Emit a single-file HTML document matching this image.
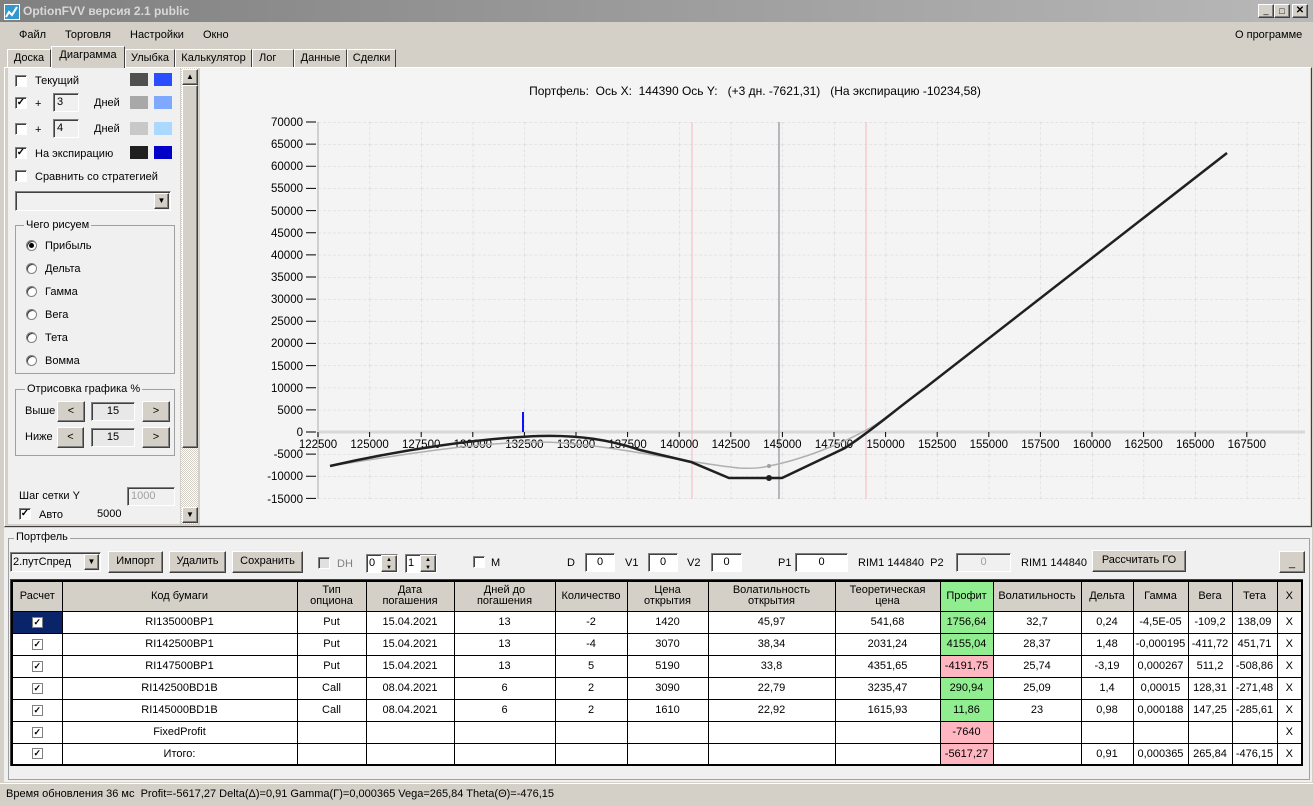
<!DOCTYPE html>
<html><head><meta charset="utf-8">
<style>
*{margin:0;padding:0;box-sizing:border-box}
body{width:1313px;height:806px;overflow:hidden;background:#d4d0c8;font-family:"Liberation Sans",sans-serif;font-size:11px;color:#000;position:relative}
.a{position:absolute}
.cb{position:absolute;width:12px;height:12px;background:#fff;border:1px solid #808080;border-right-color:#fff;border-bottom-color:#fff;box-shadow:inset 1px 1px 0 #404040;font-size:10px;line-height:10px;text-align:center;font-weight:bold}
.rb{position:absolute;width:11px;height:11px;border-radius:50%;background:#fff;border:1px solid #808080;box-shadow:inset 1px 1px 0 #404040}
.btn{position:absolute;background:#d4d0c8;border:1px solid;border-color:#fff #404040 #404040 #fff;box-shadow:inset -1px -1px 0 #808080;text-align:center;font-size:11px}
.ed{position:absolute;background:#fff;border:1px solid;border-color:#808080 #fff #fff #808080;box-shadow:inset 1px 1px 0 #404040;text-align:center;font-size:11px}
.tab{position:absolute;top:49px;height:18px;border:1px solid;border-color:#fff #404040 transparent #fff;border-bottom:none;text-align:center;line-height:17px;font-size:11px;background:#d4d0c8}
table{border-collapse:collapse;font-family:"Liberation Sans Narrow","Liberation Sans",sans-serif;font-size:11px}
td{border:1px solid #000;text-align:center;height:22px;padding:0;background:#fff;white-space:nowrap;overflow:hidden}
tr.h td{background:#d4d0c8;height:30px;line-height:11px}
.g{background:#90ee90!important}.p{background:#ffb6c1!important}
.k{display:inline-block;width:11px;height:11px;border:1px solid #808080;background:#fff;font-size:9px;line-height:9px;font-weight:bold;vertical-align:middle}
</style></head><body>
<div class="a" style="left:0;top:0;width:1313px;height:22px;background:linear-gradient(90deg,#808080,#b8b8b8);"></div>
<div class="a" style="left:4px;top:4px;width:16px;height:16px;background:#3399cc;border:1px solid #fff"></div>
<svg class="a" style="left:4px;top:4px" width="16" height="16"><path d="M2 13 L5 8 L8 11 L13 3" stroke="#fff" stroke-width="2" fill="none"/></svg>
<div class="a" style="left:23px;top:4px;color:#d8d8d8;font-weight:bold;font-size:12px">OptionFVV версия 2.1 public</div>
<div class="btn" style="left:1258px;top:4px;width:16px;height:14px;font-size:9px;line-height:10px">_</div>
<div class="btn" style="left:1274px;top:4px;width:16px;height:14px;font-size:9px;line-height:12px">□</div>
<div class="btn" style="left:1292px;top:4px;width:16px;height:14px;font-size:10px;line-height:12px;font-weight:bold">✕</div>
<div class="a" style="left:19px;top:29px">Файл</div>
<div class="a" style="left:65px;top:29px">Торговля</div>
<div class="a" style="left:130px;top:29px">Настройки</div>
<div class="a" style="left:203px;top:29px">Окно</div>
<div class="a" style="left:1235px;top:29px">О программе</div>
<div class="tab" style="left:7px;width:44px">Доска</div>
<div class="tab" style="left:51px;top:46px;height:22px;width:74px;z-index:2">Диаграмма</div>
<div class="tab" style="left:125px;width:50px">Улыбка</div>
<div class="tab" style="left:175px;width:77px">Калькулятор</div>
<div class="tab" style="left:252px;width:42px;text-align:left;padding-left:6px">Лог</div>
<div class="tab" style="left:294px;width:53px">Данные</div>
<div class="tab" style="left:347px;width:49px">Сделки</div>
<div class="a" style="left:4px;top:67px;width:1308px;height:460px;border:1px solid;border-color:#fff #404040 #404040 #fff;background:#d4d0c8"></div>
<div class="a" style="left:8px;top:68px;width:172px;height:456px;background:#f0f0f0"></div>
<div class="cb" style="left:15px;top:75px"></div><div class="a" style="left:35px;top:75px">Текущий</div>
<div class="a" style="left:130px;top:73px;width:18px;height:13px;background:#505050"></div><div class="a" style="left:154px;top:73px;width:18px;height:13px;background:#2a4dff"></div>
<div class="cb" style="left:15px;top:97px">✓</div><div class="a" style="left:35px;top:98px">+</div>
<div class="ed" style="left:53px;top:93px;width:26px;height:19px;text-align:left;padding-left:3px;line-height:16px;background:#f0f0f0">3</div>
<div class="a" style="left:94px;top:97px">Дней</div>
<div class="a" style="left:130px;top:96px;width:18px;height:13px;background:#a8a8a8"></div><div class="a" style="left:154px;top:96px;width:18px;height:13px;background:#7fa8ff"></div>
<div class="cb" style="left:15px;top:123px"></div><div class="a" style="left:35px;top:124px">+</div>
<div class="ed" style="left:53px;top:119px;width:26px;height:19px;text-align:left;padding-left:3px;line-height:16px;background:#f0f0f0">4</div>
<div class="a" style="left:94px;top:123px">Дней</div>
<div class="a" style="left:130px;top:122px;width:18px;height:13px;background:#c8c8c8"></div><div class="a" style="left:154px;top:122px;width:18px;height:13px;background:#aad8ff"></div>
<div class="cb" style="left:15px;top:147px">✓</div><div class="a" style="left:35px;top:148px">На экспирацию</div>
<div class="a" style="left:130px;top:146px;width:18px;height:13px;background:#202020"></div><div class="a" style="left:154px;top:146px;width:18px;height:13px;background:#0000c8"></div>
<div class="cb" style="left:15px;top:170px"></div><div class="a" style="left:35px;top:171px">Сравнить со стратегией</div>
<div class="ed" style="left:15px;top:191px;width:156px;height:20px;background:#f0f0f0"></div>
<div class="btn" style="left:154px;top:193px;width:15px;height:16px;font-size:8px;line-height:14px">▼</div>
<div class="a" style="left:15px;top:225px;width:160px;height:149px;border:1px solid #a0a0a0"></div>
<div class="a" style="left:24px;top:219px;background:#f0f0f0;padding:0 2px">Чего рисуем</div>
<div class="rb" style="left:26px;top:240px"></div><div class="a" style="left:29px;top:243px;width:5px;height:5px;border-radius:50%;background:#000"></div><div class="a" style="left:45px;top:240px">Прибыль</div>
<div class="rb" style="left:26px;top:263px"></div><div class="a" style="left:45px;top:263px">Дельта</div>
<div class="rb" style="left:26px;top:286px"></div><div class="a" style="left:45px;top:286px">Гамма</div>
<div class="rb" style="left:26px;top:309px"></div><div class="a" style="left:45px;top:309px">Вега</div>
<div class="rb" style="left:26px;top:332px"></div><div class="a" style="left:45px;top:332px">Тета</div>
<div class="rb" style="left:26px;top:355px"></div><div class="a" style="left:45px;top:355px">Вомма</div>
<div class="a" style="left:15px;top:389px;width:160px;height:67px;border:1px solid #a0a0a0"></div>
<div class="a" style="left:25px;top:383px;background:#f0f0f0;padding:0 2px">Отрисовка графика %</div>
<div class="a" style="left:25px;top:405px">Выше</div>
<div class="btn" style="left:57px;top:401px;width:28px;height:21px;line-height:19px">&lt;</div>
<div class="ed" style="left:91px;top:402px;width:44px;height:19px;line-height:17px;background:#e8e8e8">15</div>
<div class="btn" style="left:142px;top:401px;width:28px;height:21px;line-height:19px">&gt;</div>
<div class="a" style="left:25px;top:431px">Ниже</div>
<div class="btn" style="left:57px;top:427px;width:27px;height:21px;line-height:19px">&lt;</div>
<div class="ed" style="left:91px;top:428px;width:44px;height:19px;line-height:17px;background:#e8e8e8">15</div>
<div class="btn" style="left:142px;top:427px;width:28px;height:21px;line-height:19px">&gt;</div>
<div class="a" style="left:19px;top:490px">Шаг сетки Y</div>
<div class="ed" style="left:127px;top:487px;width:48px;height:19px;text-align:left;padding-left:3px;line-height:17px;color:#a0a0a0;background:#f0f0f0">1000</div>
<div class="cb" style="left:19px;top:508px">✓</div><div class="a" style="left:39px;top:509px">Авто</div><div class="a" style="left:97px;top:508px">5000</div>
<div class="a" style="left:181px;top:68px;width:17px;height:456px;background:repeating-conic-gradient(#d4d0c8 0 25%,#fff 0 50%) 0 0/2px 2px"></div>
<div class="btn" style="left:182px;top:69px;width:16px;height:16px;font-size:8px;line-height:13px">▲</div>
<div class="btn" style="left:182px;top:85px;width:16px;height:363px"></div>
<div class="btn" style="left:182px;top:507px;width:16px;height:16px;font-size:8px;line-height:13px">▼</div>
<div class="a" style="left:200px;top:68px;width:1110px;height:457px;background:#f4f4f4"></div>
<div class="a" style="left:200px;top:84px;width:1110px;text-align:center;font-size:12px">Портфель:&nbsp; Ось X:&nbsp; 144390 Ось Y:&nbsp;&nbsp; (+3 дн. -7621,31)&nbsp;&nbsp; (На экспирацию -10234,58)</div>
<svg class="a" style="left:0;top:0" width="1313" height="806" font-family="Liberation Sans,sans-serif" font-size="11.5">
<defs><pattern id="gr" x="318" y="122" width="51.6" height="22.14" patternUnits="userSpaceOnUse">
<path d="M0 0 H51.6 M0 0 V22.14" stroke="#d4d4d4" stroke-width="1" stroke-dasharray="3,2" fill="none"/></pattern></defs>
<rect x="318" y="122" width="987" height="377" fill="url(#gr)"/>
<line x1="318" y1="122" x2="318" y2="499" stroke="#d0d0d0" stroke-width="2"/>
<line x1="318" y1="432" x2="1305" y2="432" stroke="#d8d8d8" stroke-width="3"/>
<line x1="692" y1="122" x2="692" y2="499" stroke="#f4b8c0"/>
<line x1="866" y1="122" x2="866" y2="499" stroke="#f4b8c0"/>
<line x1="779" y1="122" x2="779" y2="499" stroke="#a0a0a8" stroke-width="1.5"/>
<line x1="523" y1="412" x2="523" y2="432" stroke="#1010ff" stroke-width="2"/>
<g stroke="#000">
<path d="M306 122h10M306 144.1h10M306 166.3h10M306 188.4h10M306 210.6h10M306 232.7h10M306 254.9h10M306 277h10M306 299.1h10M306 321.3h10M306 343.4h10M306 365.6h10M306 387.7h10M306 409.9h10M306 432h10M306 454.1h10M306 476.3h10M306 498.4h10"/>
<path d="M318 432v5M369.6 432v5M421.2 432v5M472.8 432v5M524.4 432v5M576 432v5M627.6 432v5M679.2 432v5M730.8 432v5M782.4 432v5M834 432v5M885.6 432v5M937.2 432v5M988.8 432v5M1040.4 432v5M1092 432v5M1143.6 432v5M1195.2 432v5M1246.8 432v5"/>
</g>
<g text-anchor="end">
<text x="303" y="126">70000</text><text x="303" y="148">65000</text><text x="303" y="170">60000</text><text x="303" y="192">55000</text><text x="303" y="215">50000</text><text x="303" y="237">45000</text><text x="303" y="259">40000</text><text x="303" y="281">35000</text><text x="303" y="303">30000</text><text x="303" y="325">25000</text><text x="303" y="347">20000</text><text x="303" y="370">15000</text><text x="303" y="392">10000</text><text x="303" y="414">5000</text><text x="303" y="436">0</text><text x="303" y="458">-5000</text><text x="303" y="480">-10000</text><text x="303" y="503">-15000</text>
</g>
<g text-anchor="middle">
<text x="318" y="448">122500</text><text x="369.6" y="448">125000</text><text x="421.2" y="448">127500</text><text x="472.8" y="448">130000</text><text x="524.4" y="448">132500</text><text x="576" y="448">135000</text><text x="627.6" y="448">137500</text><text x="679.2" y="448">140000</text><text x="730.8" y="448">142500</text><text x="782.4" y="448">145000</text><text x="834" y="448">147500</text><text x="885.6" y="448">150000</text><text x="937.2" y="448">152500</text><text x="988.8" y="448">155000</text><text x="1040.4" y="448">157500</text><text x="1092" y="448">160000</text><text x="1143.6" y="448">162500</text><text x="1195.2" y="448">165000</text><text x="1246.8" y="448">167500</text>
</g>
<path d="M330 466 C 400 455, 470 443, 537 442 C 600 442, 680 462, 739 468 C 755 469, 765 467, 769 466 C 800 460, 840 445, 870 428 C 890 416, 905 403, 925 388 L 1227 153" stroke="#b0b0b0" stroke-width="1.5" fill="none"/>
<path d="M330 466 C 400 450, 480 438, 540 436 C 580 435, 610 440, 640 450 L 691 462 L 729 478 L 782 478 L 845 448 C 870 432, 895 410, 925 388 L 1227 153" stroke="#202020" stroke-width="2.5" fill="none"/>
<circle cx="769" cy="478" r="3" fill="#202020"/><circle cx="769" cy="466" r="2" fill="#a0a0a0"/>
</svg>
<div class="a" style="left:4px;top:528px;width:1308px;height:254px;background:#f0f0f0"></div>
<div class="a" style="left:8px;top:538px;width:1302px;height:242px;border:1px solid #a0a0a0"></div>
<div class="a" style="left:14px;top:531px;background:#f0f0f0;padding:0 2px">Портфель</div>
<div class="ed" style="left:10px;top:552px;width:91px;height:20px;text-align:left;padding-left:2px;line-height:18px;background:#f0f0f0">2.путСпред</div>
<div class="btn" style="left:84px;top:554px;width:15px;height:16px;font-size:8px;line-height:14px">▼</div>
<div class="btn" style="left:108px;top:551px;width:55px;height:22px;line-height:19px">Импорт</div>
<div class="btn" style="left:169px;top:551px;width:57px;height:22px;line-height:19px">Удалить</div>
<div class="btn" style="left:232px;top:551px;width:71px;height:22px;line-height:19px">Сохранить</div>
<div class="cb" style="left:318px;top:557px;background:#e0e0e0"></div><div class="a" style="left:337px;top:558px;color:#808080">DH</div>
<div class="ed" style="left:366px;top:554px;width:32px;height:19px;text-align:left;padding-left:2px;line-height:17px">0</div>
<div class="btn" style="left:381px;top:555px;width:16px;height:17px;font-size:6px;line-height:8px">▲<br>▼</div>
<div class="ed" style="left:405px;top:554px;width:32px;height:19px;text-align:left;padding-left:2px;line-height:17px">1</div>
<div class="btn" style="left:420px;top:555px;width:16px;height:17px;font-size:6px;line-height:8px">▲<br>▼</div>
<div class="cb" style="left:473px;top:556px"></div><div class="a" style="left:491px;top:557px">M</div>
<div class="a" style="left:567px;top:557px">D</div><div class="ed" style="left:585px;top:553px;width:30px;height:19px;line-height:17px">0</div>
<div class="a" style="left:625px;top:557px">V1</div><div class="ed" style="left:648px;top:553px;width:30px;height:19px;line-height:17px">0</div>
<div class="a" style="left:687px;top:557px">V2</div><div class="ed" style="left:711px;top:553px;width:31px;height:19px;line-height:17px">0</div>
<div class="a" style="left:778px;top:557px">P1</div><div class="ed" style="left:795px;top:553px;width:53px;height:19px;line-height:17px">0</div>
<div class="a" style="left:858px;top:557px">RIM1 144840&nbsp; P2</div>
<div class="ed" style="left:956px;top:553px;width:55px;height:19px;line-height:17px;color:#a0a0a0;background:#f0f0f0">0</div>
<div class="a" style="left:1021px;top:557px">RIM1 144840</div>
<div class="btn" style="left:1092px;top:550px;width:94px;height:22px;line-height:19px">Рассчитать ГО</div>
<div class="btn" style="left:1279px;top:551px;width:26px;height:22px;line-height:22px">_</div>
<div class="a" style="left:10px;top:579px;width:1293px;height:187px;background:#fff;border:1px solid #404040"></div>
<table class="a" style="left:11px;top:580px;width:1291px;table-layout:fixed;border:2px solid #000">
<colgroup><col style="width:50px"><col style="width:235px"><col style="width:69px"><col style="width:88px"><col style="width:101px"><col style="width:72px"><col style="width:81px"><col style="width:127px"><col style="width:105px"><col style="width:53px"><col style="width:88px"><col style="width:52px"><col style="width:55px"><col style="width:44px"><col style="width:45px"><col style="width:25px"></colgroup>
<tr class="h"><td>Расчет</td><td>Код бумаги</td><td>Тип<br>опциона</td><td>Дата<br>погашения</td><td>Дней до<br>погашения</td><td>Количество</td><td>Цена<br>открытия</td><td>Волатильность<br>открытия</td><td>Теоретическая<br>цена</td><td class="g">Профит</td><td>Волатильность</td><td>Дельта</td><td>Гамма</td><td>Вега</td><td>Тета</td><td>X</td></tr>
<tr><td style="background:#0a246a"><span class="k">✓</span></td><td>RI135000BP1</td><td>Put</td><td>15.04.2021</td><td>13</td><td>-2</td><td>1420</td><td>45,97</td><td>541,68</td><td class="g">1756,64</td><td>32,7</td><td>0,24</td><td>-4,5E-05</td><td>-109,2</td><td>138,09</td><td>X</td></tr>
<tr><td><span class="k">✓</span></td><td>RI142500BP1</td><td>Put</td><td>15.04.2021</td><td>13</td><td>-4</td><td>3070</td><td>38,34</td><td>2031,24</td><td class="g">4155,04</td><td>28,37</td><td>1,48</td><td>-0,000195</td><td>-411,72</td><td>451,71</td><td>X</td></tr>
<tr><td><span class="k">✓</span></td><td>RI147500BP1</td><td>Put</td><td>15.04.2021</td><td>13</td><td>5</td><td>5190</td><td>33,8</td><td>4351,65</td><td class="p">-4191,75</td><td>25,74</td><td>-3,19</td><td>0,000267</td><td>511,2</td><td>-508,86</td><td>X</td></tr>
<tr><td><span class="k">✓</span></td><td>RI142500BD1B</td><td>Call</td><td>08.04.2021</td><td>6</td><td>2</td><td>3090</td><td>22,79</td><td>3235,47</td><td class="g">290,94</td><td>25,09</td><td>1,4</td><td>0,00015</td><td>128,31</td><td>-271,48</td><td>X</td></tr>
<tr><td><span class="k">✓</span></td><td>RI145000BD1B</td><td>Call</td><td>08.04.2021</td><td>6</td><td>2</td><td>1610</td><td>22,92</td><td>1615,93</td><td class="g">11,86</td><td>23</td><td>0,98</td><td>0,000188</td><td>147,25</td><td>-285,61</td><td>X</td></tr>
<tr><td><span class="k">✓</span></td><td>FixedProfit</td><td></td><td></td><td></td><td></td><td></td><td></td><td></td><td class="p">-7640</td><td></td><td></td><td></td><td></td><td></td><td>X</td></tr>
<tr><td><span class="k">✓</span></td><td>Итого:</td><td></td><td></td><td></td><td></td><td></td><td></td><td></td><td class="p">-5617,27</td><td></td><td>0,91</td><td>0,000365</td><td>265,84</td><td>-476,15</td><td>X</td></tr>
</table>
<div class="a" style="left:0;top:783px;width:1313px;height:23px;background:#d4d0c8;border-top:1px solid #fff"></div>
<div class="a" style="left:6px;top:788px">Время обновления 36 мс&nbsp; Profit=-5617,27 Delta(Δ)=0,91 Gamma(Γ)=0,000365 Vega=265,84 Theta(Θ)=-476,15</div>
</body></html>
